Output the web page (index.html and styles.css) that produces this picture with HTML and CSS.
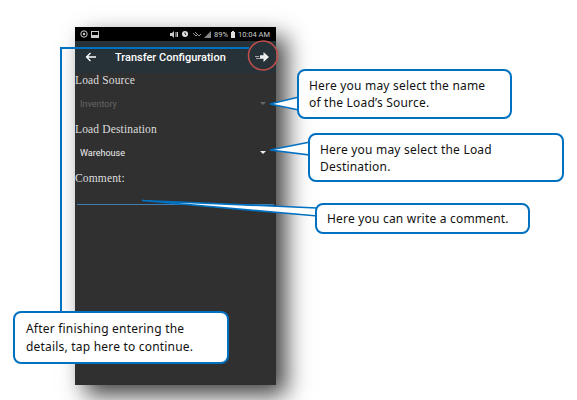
FILE: index.html
```html
<!DOCTYPE html>
<html lang="en">
  <head>
    <meta charset="utf-8" />
    <title>Transfer Configuration</title>
    <link rel="stylesheet" href="styles.css">
  </head>
  <body>
    <div class="phone">
      <div class="status-bar">
        <div class="status-left">
          <svg width="8" height="8" viewBox="0 0 8 8"><circle cx="4" cy="4" r="3.2" fill="none" stroke="#ccc"/><circle cx="4" cy="4" r="1.2" fill="#ccc"/></svg>
          <svg width="8" height="7" viewBox="0 0 8 7"><rect x="0.5" y="0.5" width="7" height="6" fill="none" stroke="#ccc"/><rect x="1" y="4" width="6" height="2" fill="#ccc"/></svg>
        </div>
        <div class="status-right">
          <svg width="8" height="7" viewBox="0 0 8 7"><path d="M0 2h2l2-2v7L2 5H0z" fill="#ccc"/><path d="M6 1v5M7.5 1v5" stroke="#ccc"/></svg>
          <svg width="8" height="8" viewBox="0 0 8 8"><circle cx="4" cy="4" r="3" fill="#ddd"/><path d="M4 2.5V4l1 1" stroke="#222" fill="none"/></svg>
          <svg width="9" height="6" viewBox="0 0 9 6"><path d="M1 2l3 3 1-1M3 1l4 4 2-2" stroke="#999" fill="none"/></svg>
          <svg width="7" height="7" viewBox="0 0 7 7"><path d="M0 7L7 0v7z" fill="#888"/></svg>
          <span>89%</span>
          <svg width="4" height="7" viewBox="0 0 4 7"><rect y="1" width="4" height="6" fill="#ddd"/><rect x="1" width="2" height="1" fill="#ddd"/></svg>
          <span>10:04 AM</span>
        </div>
      </div>
      <div class="toolbar">
        <svg class="back-icon" width="12" height="10" viewBox="0 0 12 10"><path d="M11 5H2M5.5 1L1.5 5l4 4" fill="none" stroke="#fff" stroke-width="1.3"/></svg>
        <div class="toolbar-title">Transfer Configuration</div>
        <svg class="next-icon" width="14" height="10" viewBox="0 0 14 10"><path d="M8.500 0l5.500 5-5.500 5V6.800H5V3.200h3.500z" fill="#eee"/><path d="M0 4.500h4M1 6.500h4" stroke="#aaa"/></svg>
      </div>
      <div class="form">
        <div class="field-label">Load Source</div>
        <div class="select select-disabled">
          <span>Inventory</span>
          <span class="caret caret-disabled"></span>
        </div>
        <div class="field-label">Load Destination</div>
        <div class="select">
          <span>Warehouse</span>
          <span class="caret"></span>
        </div>
        <div class="field-label">Comment:</div>
        <div class="comment-line"></div>
      </div>
    </div>

    <!-- annotation lines and pointers drawn on top of the screenshot -->
    <svg class="annotations" width="577" height="400" viewBox="0 0 577 400">
      <path d="M61 313V48H249" fill="none" stroke="#0070c0" stroke-width="2"/>
      <ellipse cx="263" cy="55.500" rx="14.500" ry="14.500" fill="none" stroke="#bd4f4c" stroke-width="1.600"/>
      <path d="M299 97L270 104L299 110z" fill="#fff" stroke="#0070c0" stroke-width="1.600"/>
      <path d="M310 142L270 150L310 155z" fill="#fff" stroke="#0070c0" stroke-width="1.600"/>
      <path d="M317 208L142 200.500L317 216z" fill="#fff" stroke="#0070c0" stroke-width="1.600"/>
    </svg>

    <div class="callout callout-source">Here you may select the name<br>of the Load&rsquo;s Source.</div>
    <div class="callout callout-dest">Here you may select the Load<br>Destination.</div>
    <div class="callout callout-comment">Here you can write a comment.</div>
    <div class="callout callout-next">After finishing entering the<br>details, tap here to continue.</div>
  </body>
</html>
```

FILE: styles.css
```css
body {
  box-sizing: border-box;
  height: 400px;
  margin: 0;
  padding: 27px 0 0 75px;
  background: white;
  font-family: 'Roboto', sans-serif;
  overflow: hidden;
}

.phone {
  width: 201px;
  height: 358px;
  background-color: #303030;
  box-shadow: 10px 10px 22px rgba(0,0,0,0.75);
}

.status-bar {
  display: flex;
  justify-content: space-between;
  align-items: center;
  height: 14px;
  padding: 0 6px 0 5px;
  background-color: #000;
  color: #ccc;
  font-size: 7.5px;
}

.status-left,
.status-right {
  display: flex;
  align-items: center;
  gap: 3px;
}

.toolbar {
  display: flex;
  align-items: center;
  height: 32px;
  background-color: #263238;
  color: white;
}

.back-icon {
  margin-left: 10px;
}

.toolbar-title {
  margin-left: 18px;
  font-size: 11px;
  font-weight: 500;
  white-space: nowrap;
}

.next-icon {
  margin-left: auto;
  margin-right: 7px;
}

.field-label {
  height: 14px;
  font-family: 'Liberation Serif', serif;
  font-size: 11.5px;
  line-height: 14px;
  letter-spacing: 0.15px;
  color: #ddd;
}

.select {
  display: flex;
  justify-content: space-between;
  align-items: center;
  height: 35px;
  padding: 0 10px 2px 5px;
  box-sizing: border-box;
  font-size: 9px;
  color: #eee;
}

.select-disabled {
  color: #666;
}

.caret {
  width: 0;
  height: 0;
  border-left: 3px solid transparent;
  border-right: 3px solid transparent;
  border-top: 3px solid #eee;
}

.caret-disabled {
  border-top-color: #666;
}

.comment-line {
  height: 1px;
  margin: 19px 2px 0;
  background-color: #3d7fb5;
}

.annotations {
  position: absolute;
  left: 0;
  top: 0;
}

.callout {
  position: absolute;
  box-sizing: border-box;
  display: flex;
  align-items: center;
  background: white;
  border: 2px solid #0070c0;
  border-radius: 8px;
  font-family: 'Noto Sans', sans-serif;
  font-size: 12px;
  letter-spacing: 0.2px;
  line-height: 17px;
  color: #111;
  white-space: nowrap;
}

.callout-source {
  left: 297px;
  top: 69px;
  width: 215px;
  height: 50px;
  padding-left: 10px;
}

.callout-dest {
  left: 308px;
  top: 133px;
  width: 256px;
  height: 49px;
  padding-left: 10px;
}

.callout-comment {
  left: 315px;
  top: 203px;
  width: 215px;
  height: 31px;
  padding-left: 10px;
}

.callout-next {
  left: 13px;
  top: 311px;
  width: 216px;
  height: 53px;
  padding-left: 11px;
  line-height: 18px;
}
```
